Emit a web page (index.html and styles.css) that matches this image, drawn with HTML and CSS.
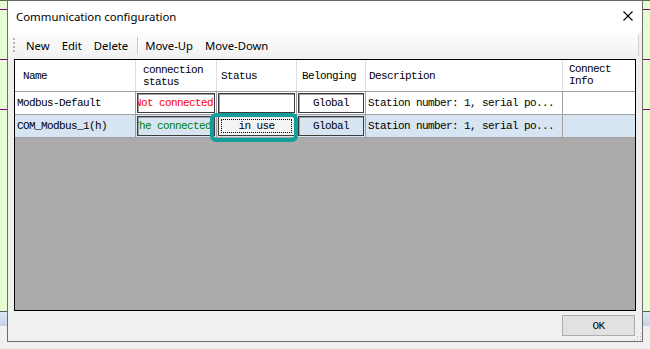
FILE: index.html
```html
<!DOCTYPE html>
<html lang="en">
<head>
<meta charset="UTF-8">
<title>Communication configuration</title>
<link rel="stylesheet" href="styles.css">
</head>
<body>

<div class="desk">
  <div class="desk-top">
    <div class="desk-line first"></div>
    <div class="desk-line"></div>
    <div class="desk-line"></div>
  </div>
  <div class="desk-strip"></div>
</div>

<div class="dialog">
  <div class="titlebar">
    <span class="title">Communication configuration</span>
    <svg class="close" width="10" height="10" viewBox="0 0 10 10">
      <path d="M0.5 0.5 L9.5 9.5 M9.5 0.5 L0.5 9.5" stroke="#000" stroke-width="1.1" fill="none"/>
    </svg>
  </div>

  <div class="toolbar">
    <div class="grip"></div>
    <span class="tool">New</span>
    <span class="tool">Edit</span>
    <span class="tool">Delete</span>
    <div class="sep"></div>
    <span class="tool">Move-Up</span>
    <span class="tool">Move-Down</span>
    <div class="tool-end"></div>
  </div>

  <div class="grid">
    <div class="row head">
      <div class="cell pad-name">Name</div>
      <div class="cell pad-conn">connection<br>status</div>
      <div class="cell pad-status">Status</div>
      <div class="cell pad-belong">Belonging</div>
      <div class="cell pad-desc">Description</div>
      <div class="cell pad-info">Connect<br>Info</div>
    </div>
    <div class="row">
      <div class="cell text">Modbus-Default</div>
      <div class="cell"><div class="box"><span class="state red">Not connected</span></div></div>
      <div class="cell"><div class="box white"></div></div>
      <div class="cell"><div class="box white center">Global</div></div>
      <div class="cell text">Station number: 1, serial po...</div>
      <div class="cell"></div>
    </div>
    <div class="row selected">
      <div class="cell text">COM_Modbus_1(h)</div>
      <div class="cell"><div class="box"><span class="state green shift">The connected</span></div></div>
      <div class="cell"><div class="box button"><span class="focus">in use</span></div></div>
      <div class="cell"><div class="box center">Global</div></div>
      <div class="cell text">Station number: 1, serial po...</div>
      <div class="cell"></div>
    </div>
    <div class="highlight"></div>
  </div>

  <div class="footer">
    <button class="ok">OK</button>
    <svg class="sizegrip" width="9" height="9" viewBox="0 0 9 9">
      <rect x="7" y="1" width="1" height="1" fill="#b8b8b8"/>
      <rect x="7" y="4" width="1" height="1" fill="#b8b8b8"/>
      <rect x="4" y="4" width="1" height="1" fill="#b8b8b8"/>
      <rect x="7" y="7" width="1" height="1" fill="#b8b8b8"/>
      <rect x="4" y="7" width="1" height="1" fill="#b8b8b8"/>
      <rect x="1" y="7" width="1" height="1" fill="#b8b8b8"/>
    </svg>
  </div>
</div>

</body>
</html>
```

FILE: styles.css
```css
body {
  margin: 0;
  height: 349px;
  overflow: hidden;
  position: relative;
  background-color: #f0f0f0;
  font-family: "Noto Sans", Arial, sans-serif;
}

/* background application */
.desk-top {
  height: 310px;
  background-color: #e6fed2;
  border-top: 1px solid #5d6a58;
  border-bottom: 1px solid #5a5a5a;
}
.desk-line {
  height: 49px;
  border-bottom: 1px solid #800080;
}
.desk-line.first {
  height: 8px;
}
.desk-strip {
  height: 14px;
  background: linear-gradient(#dde7f3, #c4d4e6);
}

/* dialog window */
.dialog {
  position: absolute;
  left: 7px;
  top: 0;
  width: 636px;
  height: 342px;
  box-sizing: border-box;
  border: 1px solid #6c6c6c;
  background-color: #f0f0f0;
  display: flex;
  flex-direction: column;
}
.titlebar {
  height: 30px;
  flex-shrink: 0;
  background-color: #fff;
  display: flex;
  align-items: center;
  padding: 0 9px 0 8px;
}
.title {
  font-size: 11.4px;
  color: #000;
}
.close {
  margin-left: auto;
}

.toolbar {
  height: 28px;
  flex-shrink: 0;
  display: flex;
  align-items: center;
  padding-left: 5px;
  margin-right: 3px;
  background: linear-gradient(#fefefe, #f0f0f0);
  font-size: 11.3px;
}
.grip {
  width: 2px;
  height: 14px;
  margin-right: 5px;
  background: repeating-linear-gradient(#b4b4b4 0 2px, transparent 2px 4px);
}
.tool {
  padding: 0 6px;
  color: #000;
}
.sep {
  width: 1px;
  height: 17px;
  margin-left: 3px;
  background-color: #c6c6c6;
  border-right: 1px solid #fff;
}
.tool-end {
  margin-left: auto;
  width: 1px;
  height: 21px;
  background-color: #d2d2d2;
}

/* data grid */
.grid {
  position: relative;
  height: 250px;
  flex-shrink: 0;
  margin: 0 6px;
  border: 1px solid #000;
  background-color: #ababab;
  font-family: "Liberation Mono", "DejaVu Sans Mono", monospace;
  font-size: 11px;
  letter-spacing: -0.6px;
  color: #000;
}
.row {
  display: grid;
  grid-template-columns: 121px 81px 80px 69px 197px 72px;
  height: 22px;
  background-color: #fff;
  border-bottom: 1px solid #a0a0a0;
}
.row.selected {
  background-color: #d7e4f2;
}
.row.head {
  height: 31px;
}
.cell {
  border-right: 1px solid #a0a0a0;
  overflow: hidden;
  white-space: nowrap;
  display: flex;
  align-items: center;
}
.cell:last-child {
  border-right: none;
}
.head .cell {
  border-right-color: #dedede;
  line-height: 12px;
}
.head .cell:last-child {
  border-right: none;
}
.pad-name { padding-left: 8px; }
.pad-conn { padding-left: 7px; }
.pad-status { padding-left: 4px; }
.pad-belong { padding-left: 5px; }
.pad-desc { padding-left: 3px; }
.pad-info { padding-left: 6px; align-items: flex-start; padding-top: 3px; }
.text {
  padding-left: 2px;
}

.box {
  flex: 1;
  height: 20px;
  margin: 1px;
  box-sizing: border-box;
  border: 1px solid #3c3c3c;
  box-shadow: inset 1px 1px 0 #a0a0a0;
  overflow: hidden;
  display: flex;
  align-items: center;
}
.box.white {
  background-color: #fff;
}
.box.center {
  justify-content: center;
}
.state {
  margin-left: -3px;
}
.state.shift {
  margin-left: -5px;
}
.red {
  color: #ff0000;
}
.green {
  color: #008000;
}
.box.button {
  background-color: #f4f4f4;
  box-shadow: none;
  padding: 2px;
}
.focus {
  flex: 1;
  height: 100%;
  box-sizing: border-box;
  border: 1px dotted #000;
  display: flex;
  align-items: center;
  justify-content: center;
}
.highlight {
  position: absolute;
  left: 195px;
  top: 53px;
  width: 88px;
  height: 29px;
  box-sizing: border-box;
  border: 4px solid #149e99;
  border-radius: 6px;
}

.footer {
  flex: 1;
  position: relative;
  display: flex;
  justify-content: flex-end;
  align-items: flex-start;
  padding: 4px 7px 0 0;
}
.ok {
  width: 73px;
  height: 21px;
  padding: 0;
  background-color: #e1e1e1;
  border: 1px solid #adadad;
  font-family: "Liberation Mono", monospace;
  font-size: 11px;
  letter-spacing: -0.6px;
  color: #000;
}
.sizegrip {
  position: absolute;
  right: 0;
  bottom: 0;
}
```
